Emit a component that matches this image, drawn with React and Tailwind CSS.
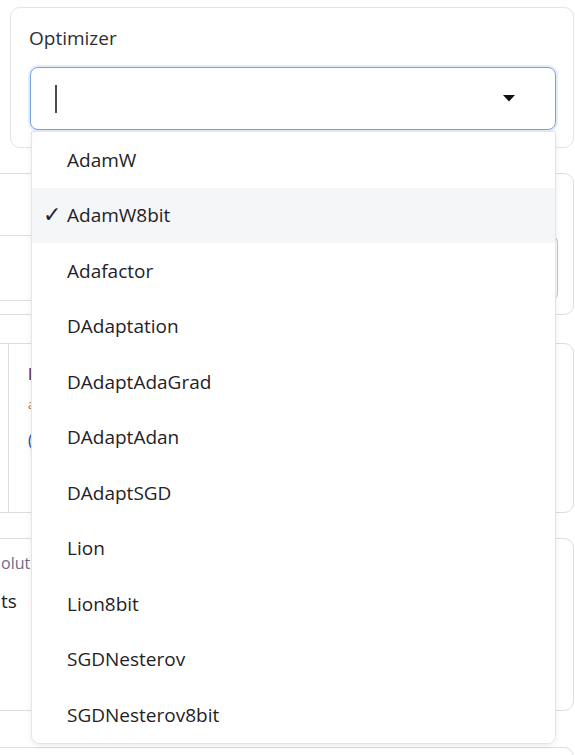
import React from "react";

const options = [
  "AdamW",
  "AdamW8bit",
  "Adafactor",
  "DAdaptation",
  "DAdaptAdaGrad",
  "DAdaptAdan",
  "DAdaptSGD",
  "Lion",
  "Lion8bit",
  "SGDNesterov",
  "SGDNesterov8bit",
];

export default function App() {
  return (
    <div
      className="relative w-[575px] h-[755px] overflow-hidden bg-white"
      style={{ fontFamily: '"Open Sans", "Noto Sans", sans-serif' }}
    >
      <div className="flex flex-col">
        {/* Card 1 */}
        <div className="ml-[10px] w-[564px] mt-[7px] h-[141px] rounded-[10px] border border-[#e2e2e7] pl-[18px] pt-[17px]">
          <div className="text-[19px] leading-[26px] text-[#2b2f36]">Optimizer</div>
          <div className="mt-[16px] ml-[1px] w-[526px] h-[63px] rounded-[8px] border border-[#76a3dc] shadow-[0_0_0_2px_#e3edf9] flex items-center pl-[24px] pr-[40px]">
            <span className="w-[1.5px] h-[28px] bg-[#4a4a4a]" />
            <span className="flex-1" />
            <svg width="12" height="7" viewBox="0 0 12 7">
              <path d="M0 0 L12 0 L6 6.5 Z" fill="#111" />
            </svg>
          </div>
        </div>

        {/* Card 2 */}
        <div className="ml-[-10px] w-[584px] mt-[25px] h-[142px] rounded-[10px] border border-[#dcdce2] pt-[61px]">
          <div className="w-[567px] h-[66px] rounded-[8px] border border-[#dcdce2] border-r-[#c4c4cc]" />
        </div>

        {/* Card 3 */}
        <div className="ml-[-10px] w-[584px] mt-[28px] h-[170px] rounded-[10px] border border-[#dcdce2] flex">
          <div className="ml-[17px] w-[548px] border-l border-[#dcdce2] pl-[19px] pt-[19px] relative">
            <div className="text-[17px] leading-[22px] text-[#6a2222]">l</div>
            <div className="text-[12px] leading-[16px] text-[#b36a3a] mt-[12px]">a</div>
            <div className="text-[16px] leading-[22px] text-[#1d3fae] mt-[16px]">(</div>
            <div className="absolute right-[0px] top-[19px] w-[500px] h-[32px] rounded-[6px] border border-[#dcdce2] border-r-[#c4c4cc]" />
          </div>
        </div>

        {/* Card 4 */}
        <div className="ml-[-10px] w-[584px] mt-[25px] h-[173px] rounded-[10px] border border-[#dcdce2] pl-[10px] pt-[14px]">
          <div className="text-[16px] leading-[21px] text-[#6b6b86]">olution</div>
          <div className="text-[19px] leading-[26px] text-[#222] mt-[14px]">ts</div>
        </div>

        {/* Card 5 */}
        <div className="ml-[-10px] w-[584px] mt-[36px] h-[80px] rounded-[10px] border border-[#dcdce2]" />
      </div>

      {/* Dropdown */}
      <ul className="absolute left-[31px] top-[131px] w-[525px] bg-white border border-[#e4e4e9] rounded-b-[9px] shadow-[0_2px_6px_rgba(0,0,0,0.08)] overflow-hidden">
        {options.map((o) => {
          const sel = o === "AdamW8bit";
          return (
            <li
              key={o}
              className={
                "h-[55.5px] flex items-center pl-[11px] text-[19px] text-[#1f2226] " +
                (sel ? "bg-[#f5f6f8]" : "bg-white")
              }
            >
              <span
                className="w-[24px] text-[22px] leading-[26px]"
                style={{ fontFamily: '"DejaVu Sans", sans-serif' }}
              >
                {sel ? "✓" : ""}
              </span>
              <span>{o}</span>
            </li>
          );
        })}
      </ul>
    </div>
  );
}
